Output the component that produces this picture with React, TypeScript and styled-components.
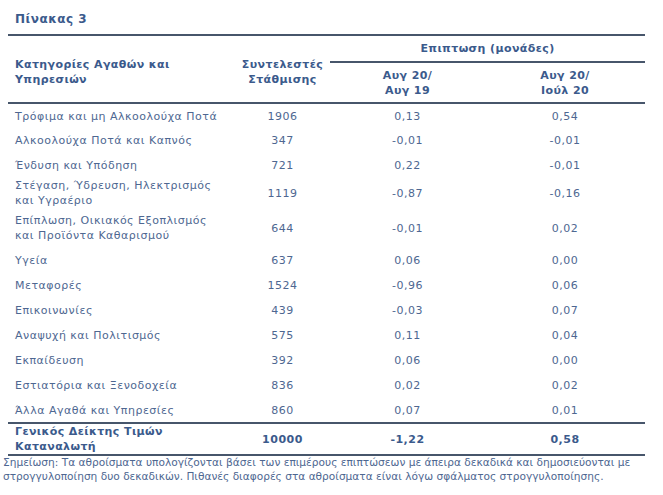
import React from "react";
import styled, { createGlobalStyle } from "styled-components";

const Global = createGlobalStyle`
  html, body { margin: 0; padding: 0; background: #ffffff; }
  body { font-family: "DejaVu Sans", Verdana, sans-serif; }
`;

const Page = styled.div`
  width: 663px;
  height: 495px;
  padding: 0 0 0 8px;
  box-sizing: border-box;
  background: #fff;
`;

const TitleBar = styled.div`
  width: 637px;
  height: 36px;
  box-sizing: border-box;
  border-bottom: 2px solid #47566b;
  display: flex;
  align-items: flex-end;
  padding: 0 0 8px 7px;
`;

const Title = styled.h1`
  margin: 0;
  font-size: 12px;
  font-weight: bold;
  color: #3b5a8c;
  line-height: 14px;
  letter-spacing: 0.5px;
`;

const Table = styled.table`
  width: 637px;
  border-collapse: collapse;
  table-layout: fixed;
  font-size: 11px;
  letter-spacing: 0.5px;
  color: #4e6791;
`;

const HeadCell = styled.th<{ $align?: string; $h?: number; $line?: boolean; $top?: number }>`
  font-weight: bold;
  color: #3b5a8c;
  letter-spacing: 0.4px;
  text-align: ${(p) => p.$align || "center"};
  vertical-align: middle;
  padding: ${(p) => p.$top || 0}px 0 0 ${(p) => (p.$align === "left" ? 7 : 0)}px;
  height: ${(p) => p.$h || 24}px;
  line-height: 15px;
  border-bottom: ${(p) => (p.$line ? "2px solid #47566b" : "none")};
`;

const Row = styled.tr<{ $h: number; $total?: boolean }>`
  height: ${(p) => p.$h}px;
  font-weight: ${(p) => (p.$total ? "bold" : "normal")};
  color: ${(p) => (p.$total ? "#3b5a8c" : "#4e6791")};
  border-top: ${(p) => (p.$total ? "2px solid #47566b" : "none")};
  border-bottom: ${(p) => (p.$total ? "2px solid #47566b" : "none")};
`;

const Label = styled.td<{ $total?: boolean }>`
  padding: 0 0 0 7px;
  text-align: left;
  vertical-align: middle;
  line-height: 15px;
  letter-spacing: ${(p) => (p.$total ? "0.4px" : "0.5px")};
`;

const Num = styled.td`
  text-align: center;
  vertical-align: middle;
  padding: 0;
`;

const Note = styled.p`
  margin: -1px 0 0 -5px;
  font-size: 10.6px;
  line-height: 14px;
  color: #4e6791;
  white-space: nowrap;
`;

type R = { label: React.ReactNode; w: string; a: string; b: string; h: number };

const rows: R[] = [
  { label: "Τρόφιμα και μη Αλκοολούχα Ποτά", w: "1906", a: "0,13", b: "0,54", h: 25 },
  { label: "Αλκοολούχα Ποτά και Καπνός", w: "347", a: "-0,01", b: "-0,01", h: 25 },
  { label: "Ένδυση και Υπόδηση", w: "721", a: "0,22", b: "-0,01", h: 25 },
  { label: <>Στέγαση, Ύδρευση, Ηλεκτρισμός<br />και Υγραέριο</>, w: "1119", a: "-0,87", b: "-0,16", h: 28 },
  { label: <>Επίπλωση, Οικιακός Εξοπλισμός<br />και Προϊόντα Καθαρισμού</>, w: "644", a: "-0,01", b: "0,02", h: 40 },
  { label: "Υγεία", w: "637", a: "0,06", b: "0,00", h: 25 },
  { label: "Μεταφορές", w: "1524", a: "-0,96", b: "0,06", h: 25 },
  { label: "Επικοινωνίες", w: "439", a: "-0,03", b: "0,07", h: 25 },
  { label: "Αναψυχή και Πολιτισμός", w: "575", a: "0,11", b: "0,04", h: 25 },
  { label: "Εκπαίδευση", w: "392", a: "0,06", b: "0,00", h: 25 },
  { label: "Εστιατόρια και Ξενοδοχεία", w: "836", a: "0,02", b: "0,02", h: 25 },
  { label: "Άλλα Αγαθά και Υπηρεσίες", w: "860", a: "0,07", b: "0,01", h: 25 },
];

export default function App() {
  return (
    <Page>
      <Global />
      <TitleBar>
        <Title>Πίνακας 3</Title>
      </TitleBar>
      <Table>
        <colgroup>
          <col style={{ width: 227 }} />
          <col style={{ width: 95 }} />
          <col style={{ width: 155 }} />
          <col style={{ width: 160 }} />
        </colgroup>
        <thead>
          <tr>
            <HeadCell rowSpan={2} $align="left" $line $top={5}>
              Κατηγορίες Αγαθών και<br />Υπηρεσιών
            </HeadCell>
            <HeadCell rowSpan={2} $line $top={5}>
              Συντελεστές<br />Στάθμισης
            </HeadCell>
            <HeadCell colSpan={2} $h={25} $line>
              Επιπτωση (μονάδες)
            </HeadCell>
          </tr>
          <tr>
            <HeadCell $h={39} $line>
              Αυγ 20/<br />Αυγ 19
            </HeadCell>
            <HeadCell $h={39} $line>
              Αυγ 20/<br />Ιούλ 20
            </HeadCell>
          </tr>
        </thead>
        <tbody>
          {rows.map((r, i) => (
            <Row key={i} $h={r.h}>
              <Label>{r.label}</Label>
              <Num>{r.w}</Num>
              <Num>{r.a}</Num>
              <Num>{r.b}</Num>
            </Row>
          ))}
          <Row $h={30} $total>
            <Label $total>
              Γενικός Δείκτης Τιμών<br />Καταναλωτή
            </Label>
            <Num>10000</Num>
            <Num>-1,22</Num>
            <Num>0,58</Num>
          </Row>
        </tbody>
      </Table>
      <Note>
        Σημείωση: Τα αθροίσματα υπολογίζονται βάσει των επιμέρους επιπτώσεων με άπειρα δεκαδικά και δημοσιεύονται με
        <br />
        στρογγυλοποίηση δυο δεκαδικών. Πιθανές διαφορές στα αθροίσματα είναι λόγω σφάλματος στρογγυλοποίησης.
      </Note>
    </Page>
  );
}
